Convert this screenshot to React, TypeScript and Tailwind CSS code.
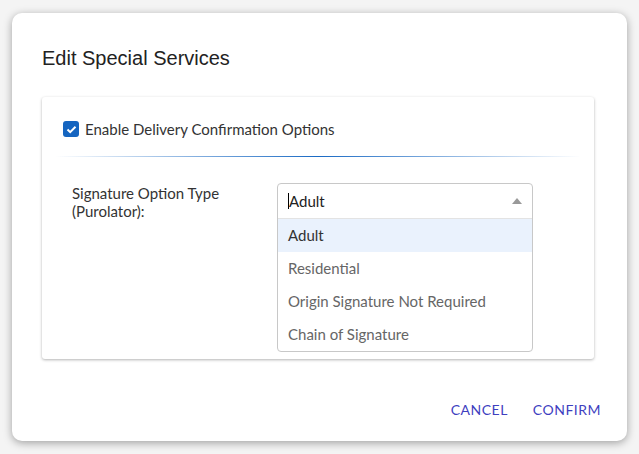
export default function App() {
  const opts = ["Adult", "Residential", "Origin Signature Not Required", "Chain of Signature"];
  return (
    <div className="w-[639px] h-[454px] bg-[#f4f4f4] pt-[13px] pl-[12px]" style={{ fontFamily: "Lato, sans-serif" }}>
      <div className="w-[615px] h-[428px] bg-white rounded-[10px] shadow-[0_2px_8px_rgba(0,0,0,0.35)] pt-[33px] pl-[30px] pr-[33px] relative">
        <h2 className="text-[20px] leading-[24px] text-[#222]" style={{ fontFamily: "Arial, 'Liberation Sans', sans-serif" }}>Edit Special Services</h2>
        <div className="mt-[27px] h-[262px] bg-white rounded-[3px] shadow-[0_1px_3px_rgba(0,0,0,0.3)] relative">
          <div className="flex items-center pt-[21px] pl-[21px] gap-[6px]">
            <div className="w-[16px] h-[16px] rounded-[3px] bg-[#1565c0] flex items-center justify-center">
              <svg width="11" height="9" viewBox="0 0 11 9"><path d="M1.5 4.5L4.2 7.2L9.5 1.8" stroke="white" strokeWidth="2" fill="none" /></svg>
            </div>
            <span className="text-[15px] text-[#333]">Enable Delivery Confirmation Options</span>
          </div>
          <div className="mx-[13px] mt-[15px] h-px bg-gradient-to-r from-transparent via-[#1a6ac4] to-transparent" />
          <div className="flex pl-[30px] pt-[27px]">
            <div className="w-[205px] text-[15px] leading-[18px] text-[#333]">Signature Option Type<br />(Purolator):</div>
            <div className="w-[256px] -mt-[1px] border border-[#c8c8c8] rounded-[4px] bg-white">
              <div className="h-[35px] flex items-center px-[10px] border-b border-[#e3e3e3] text-[15px] text-[#222]">
                <span className="border-l border-black leading-[16px]">Adult</span>
                <svg className="ml-auto" width="10" height="6" viewBox="0 0 10 6"><path d="M0 6L5 0L10 6Z" fill="#999" /></svg>
              </div>
              {opts.map((o, i) => (
                <div key={o} className={`h-[33px] flex items-center px-[10px] text-[15px] ${i === 0 ? "bg-[#eaf2fd] text-[#333]" : "text-[#666]"}`}>{o}</div>
              ))}
            </div>
          </div>
        </div>
        <div className="absolute right-[26px] top-[386px] flex gap-[25px] text-[14px] text-[#3f3fbf] tracking-[0.5px]">
          <span>CANCEL</span><span>CONFIRM</span>
        </div>
      </div>
    </div>
  );
}
